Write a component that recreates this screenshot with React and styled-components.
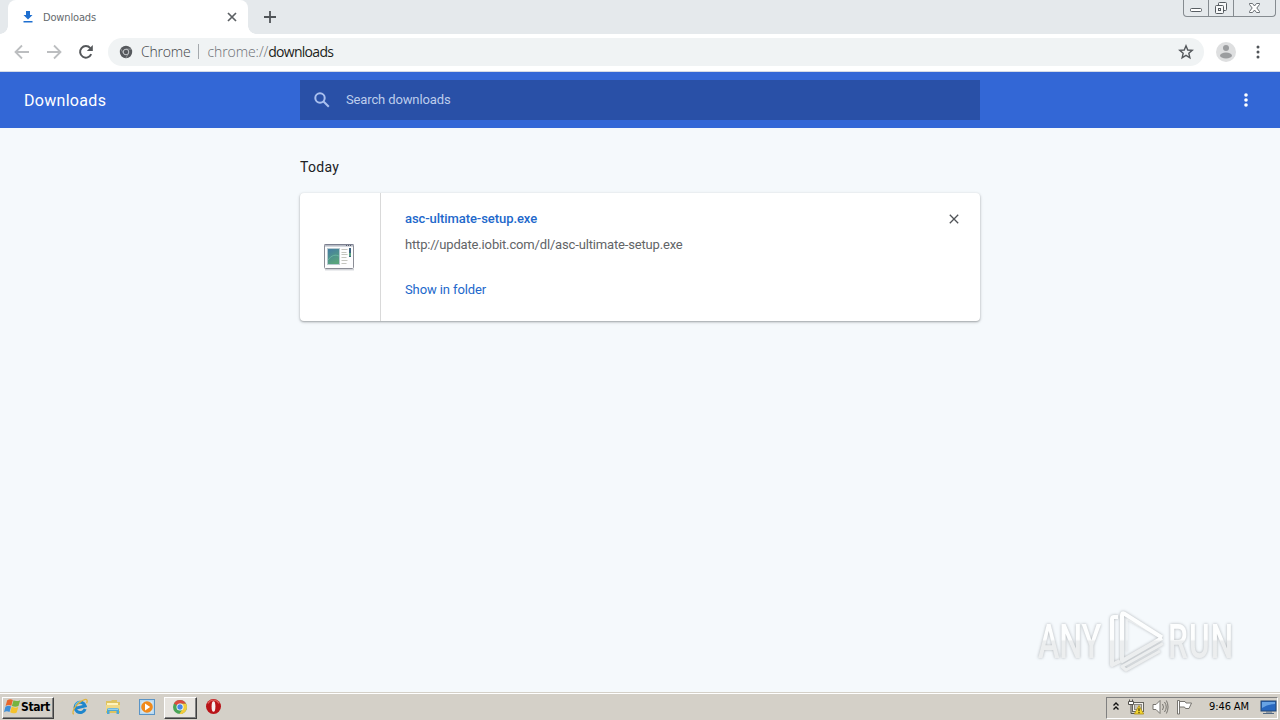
import styled, { createGlobalStyle, css } from 'styled-components';

const GlobalStyle = createGlobalStyle`
  * {
    box-sizing: border-box;
  }

  body {
    margin: 0;
    overflow: hidden;
    font-family: Roboto, "Liberation Sans", sans-serif;
  }

  svg {
    display: block;
    flex-shrink: 0;
  }

  button {
    padding: 0;
    border: none;
    background: none;
    font: inherit;
    color: inherit;
  }
`;

const Screen = styled.div`
  position: relative;
  display: flex;
  flex-direction: column;
  width: 1280px;
  height: 720px;
  background: #f5f9fc;
`;

/* Browser frame */

const TabStrip = styled.div`
  display: flex;
  height: 34px;
  padding-left: 8px;
  background: #e5e9ec;
`;

const Tab = styled.div`
  position: relative;
  display: flex;
  align-items: center;
  width: 240px;
  padding: 0 10px 0 14px;
  border-radius: 8px 8px 0 0;
  background: #fff;

  &::before,
  &::after {
    content: '';
    position: absolute;
    bottom: 0;
    width: 8px;
    height: 8px;
  }

  &::before {
    left: -8px;
    background: radial-gradient(circle at 0 0, transparent 7.5px, #fff 8px);
  }

  &::after {
    right: -8px;
    background: radial-gradient(circle at 100% 0, transparent 7.5px, #fff 8px);
  }
`;

const TabTitle = styled.span`
  flex: 1;
  margin-left: 9px;
  font-family: "DejaVu Sans Condensed", "DejaVu Sans", sans-serif;
  font-size: 11px;
  font-stretch: condensed;
  letter-spacing: -0.15px;
  color: #65696d;
`;

const NewTab = styled.button`
  display: flex;
  align-items: center;
  margin-left: 15px;
`;

const WindowControls = styled.div`
  display: flex;
  height: 17px;
  margin: 0 4px 0 auto;
  border: 1px solid #858b90;
  border-top: none;
  border-radius: 0 0 4px 4px;
`;

const WindowButton = styled.button`
  display: flex;
  align-items: center;
  justify-content: center;
  width: ${({ $width }) => $width}px;

  & + & {
    border-left: 1px solid #858b90;
  }
`;

const Toolbar = styled.div`
  display: flex;
  align-items: center;
  height: 38px;
  padding: 0 14px 2px;
  border-bottom: 1px solid #d5dbe6;
  background: #fff;
`;

const NavButtons = styled.div`
  display: flex;
  gap: 16px;
`;

const Omnibox = styled.div`
  display: flex;
  align-items: center;
  width: 1096px;
  height: 28px;
  margin: 0 12px 0 14px;
  padding: 0 10px 0 11px;
  border-radius: 14px;
  background: #f0f3f4;
  font-family: "Open Sans", "Noto Sans", sans-serif;
  font-size: 14px;
  font-weight: 300;
  color: #3f4347;

  svg:last-child {
    margin-left: auto;
  }
`;

const SiteName = styled.span`
  margin-left: 8px;
  letter-spacing: -0.2px;
`;

const Separator = styled.span`
  width: 1px;
  height: 15px;
  margin: 0 8px 0 8px;
  background: #a5a9ad;
`;

const Url = styled.span`
  letter-spacing: -0.08px;
  color: #6b6f73;

  b {
    font-weight: 400;
    letter-spacing: -0.72px;
    color: #1c1e20;
  }
`;

const MenuButton = styled.button`
  display: flex;
  justify-content: center;
  width: 16px;
  margin-left: 14px;
`;

/* Downloads page */

const PageHeader = styled.header`
  display: grid;
  grid-template-columns: 1fr 680px 1fr;
  align-items: center;
  height: 56px;
  padding: 0 24px;
  background: #3367d6;
  color: #fff;
`;

const Heading = styled.h1`
  margin: 1px 0 0;
  font-size: 16px;
  font-weight: 400;
  letter-spacing: 0.3px;
`;

const SearchField = styled.label`
  display: flex;
  align-items: center;
  gap: 14px;
  height: 40px;
  padding-left: 12px;
  background: #2950a7;
  font-size: 13px;
  letter-spacing: -0.13px;
  color: #bdcdec;
`;

const Placeholder = styled.span`
  padding-bottom: 2px;
`;

const HeaderMenu = styled.button`
  justify-self: end;
  margin-right: 2px;
  width: 16px;
  display: flex;
  justify-content: center;
`;

const Content = styled.main`
  flex: 1;
  width: 680px;
  margin: 0 auto;
  padding-top: 29px;
`;

const DateLabel = styled.h2`
  margin: 0;
  font-size: 14px;
  font-weight: 400;
  line-height: 20px;
  letter-spacing: 0.3px;
  color: #202124;
`;

const Card = styled.article`
  display: flex;
  height: 128px;
  margin-top: 16px;
  border-radius: 4px;
  background: #fff;
  box-shadow: 0 1px 2px rgba(60, 64, 67, 0.38), 0 1px 3px 1px rgba(60, 64, 67, 0.1);
`;

const FileIcon = styled.div`
  display: flex;
  align-items: center;
  justify-content: center;
  width: 81px;
  padding-right: 2px;
  border-right: 1px solid #d9d9d9;
`;

const Details = styled.div`
  display: flex;
  flex: 1;
  flex-direction: column;
  align-items: flex-start;
  padding: 16px 0 0 24px;
  font-size: 13px;
  line-height: 20px;
`;

const FileName = styled.a`
  font-weight: 500;
  letter-spacing: -0.07px;
  color: #2268cb;
`;

const FileUrl = styled.span`
  margin-top: 6px;
  letter-spacing: -0.16px;
  color: #626467;
`;

const ShowLink = styled.a`
  margin-top: 25px;
  letter-spacing: -0.1px;
  color: #2268cb;
`;

const RemoveButton = styled.button`
  align-self: flex-start;
  margin: 21px 21px 0 0;
`;

const Watermark = styled.div`
  position: absolute;
  right: 38px;
  bottom: 40px;
  filter: drop-shadow(0 0 1.5px rgba(80, 85, 90, 0.42));
`;

/* Taskbar */

const Taskbar = styled.footer`
  display: flex;
  align-items: center;
  height: 28px;
  padding: 2px 2px 0;
  border-top: 1px solid #d4d0c8;
  background: #d4d0c8;
  box-shadow: inset 0 1px 0 #fff;
  font-family: "DejaVu Sans Condensed", "DejaVu Sans", sans-serif;
  font-size: 11px;
  font-stretch: condensed;
`;

const raised = css`
  border: 1px solid;
  border-color: #fff #404040 #404040 #fff;
  box-shadow: inset -1px -1px 0 #808080;
`;

const StartButton = styled.button`
  display: flex;
  align-items: center;
  width: 52px;
  height: 22px;
  padding: 0 0 2px 1px;
  font-weight: 700;
  font-size: 12px;
  letter-spacing: -0.4px;
  color: #000;
  ${raised}
`;

const QuickLaunch = styled.div`
  display: flex;
  align-items: center;
  margin-left: 9px;
`;

const TaskButton = styled.button`
  display: flex;
  align-items: center;
  justify-content: center;
  width: 33.5px;
  height: 22px;
  padding-bottom: 2px;
  ${({ $active }) => $active && css`
    ${raised}
    background: #e7e4df;
  `}
`;

const Tray = styled.div`
  display: flex;
  align-items: center;
  width: 172px;
  height: 22px;
  margin-left: auto;
  padding: 0 0 2px 5px;
  border: 1px solid;
  border-color: #808080 #fff #fff #808080;
`;

const TrayIcons = styled.div`
  display: flex;
  align-items: center;
  gap: 7px;
`;

const Clock = styled.time`
  margin-left: 16px;
  margin-right: 10px;
  width: 42px;
  white-space: nowrap;
  letter-spacing: -0.1px;
  color: #000;
`;

const Dots = ({ color, size = 16, r = 1.6, step = 5 }) => (
  <svg width={size} height={size} viewBox="0 0 16 16" fill={color}>
    <circle cx="8" cy={8 - step} r={r} />
    <circle cx="8" cy="8" r={r} />
    <circle cx="8" cy={8 + step} r={r} />
  </svg>
);

const DownloadIcon = () => (
  <svg width="12" height="14" viewBox="0 0 12 14" fill="#1e6fd0">
    <path d="M4 1h4v4h2.500L6 9.500 1.500 5H4zM1.500 11h9v1.500h-9z" />
  </svg>
);

const Arrow = ({ flip }) => (
  <svg width="16" height="16" viewBox="0 0 16 16" fill="none" stroke="#bcbec0" strokeWidth="1.8">
    <path d={flip ? 'M1 8h13M8 1.5 14.5 8 8 14.5' : 'M15 8H2M8 1.5 1.5 8 8 14.5'} />
  </svg>
);

const Reload = () => (
  <svg width="16" height="16" viewBox="0 0 16 16">
    <path d="M13.2 10.2A5.8 5.8 0 1 1 12.3 4.1" fill="none" stroke="#54575a" strokeWidth="2" />
    <path d="M14.8 1v6H8.8z" fill="#54575a" />
  </svg>
);

const ChromeMono = () => (
  <svg width="14" height="14" viewBox="0 0 14 14">
    <circle cx="7" cy="7" r="6.2" fill="#56595d" />
    <circle cx="7" cy="7" r="2.8" fill="none" stroke="#d5d8da" strokeWidth="0.9" />
    <path d="M7 4.1h5.6M4.5 8.5 1.7 3.8M9.5 8.4 6.8 13.2" stroke="#b5b8ba" strokeWidth="0.6" />
  </svg>
);

const Star = () => (
  <svg width="16" height="16" viewBox="0 0 16 16" fill="none" stroke="#54585c" strokeWidth="1.4">
    <path d="m8 1.8 1.75 4.2 4.5.38-3.42 2.96 1.04 4.4L8 11.4l-3.87 2.34 1.04-4.4-3.42-2.96 4.5-.38z" />
  </svg>
);

const Avatar = () => (
  <svg width="20" height="20" viewBox="0 0 20 20">
    <circle cx="10" cy="10" r="10" fill="#dedfe0" />
    <circle cx="10" cy="6" r="3" fill="#9b9d9f" />
    <ellipse cx="10" cy="13.5" rx="6" ry="3" fill="#9b9d9f" />
  </svg>
);

const SearchIcon = () => (
  <svg width="20" height="20" viewBox="0 0 20 20" fill="none" stroke="#a9c0ef" strokeWidth="2">
    <circle cx="8" cy="8" r="4.7" />
    <path d="m11.5 11.5 5.3 5.3" />
  </svg>
);

const ExeIcon = () => (
  <svg width="32" height="28" viewBox="0 0 32 28">
    <defs>
      <linearGradient id="exe" x1="0" y1="0" x2="0.4" y2="1">
        <stop offset="0" stopColor="#437aa4" />
        <stop offset="1" stopColor="#58a47c" />
      </linearGradient>
    </defs>
    <rect x="1.5" y="1.5" width="29" height="24" rx="1" fill="#fdfdfe" stroke="#8b8d96" />
    <path d="M2 3h28" stroke="#d3d7dd" strokeWidth="2" />
    <path d="M1.5 1.8h29" stroke="#75798c" />
    <path d="M23 2.5h6" stroke="#555a6c" strokeDasharray="1 1" />
    <rect x="4.5" y="5.5" width="12" height="16" fill="url(#exe)" stroke="#b9cbd2" />
    <path d="M5 17q5-7 11-4" fill="none" stroke="#69b5a0" />
    <path d="M18.500 6.500h6M18.500 9.500h5M18.500 11.500h6M18.500 14.500h5M18.500 17.500h6M18.500 20.500h5" stroke="#c4c5bf" />
    <path d="M27 5v9" stroke="#3c6481" strokeWidth="2" />
    <path d="M27 10v3" stroke="#58a37e" strokeWidth="2" />
    <path d="M2 26.8h29" stroke="#bfc2c8" />
  </svg>
);

const WindowsLogo = () => (
  <svg width="17" height="17" viewBox="0 0 17 17">
    <path d="M3.2 2.300Q6 .3 8.900 1.900L7.300 7.800Q4.400 6.300 1.600 8z" fill="#e8672c" />
    <path d="M9.500 2.300q3 1.600 6.700-.1L14.500 8q-3 1.600-6.600 0z" fill="#76b33f" />
    <path d="M1.400 8.700q3-1.700 5.700-.3l-1.600 5.700Q2.700 12.500 0 14.300z" fill="#3f8fd8" />
    <path d="M7.700 8.800q3.300 1.600 6.600.1l-1.600 5.500q-3.200 1.800-6.500-.1z" fill="#f5c22c" />
  </svg>
);

const IeIcon = () => (
  <svg width="18" height="18" viewBox="0 0 18 18" fill="none">
    <g transform="rotate(-14 9 9)">
      <path d="M13.500 12.200a5.200 5.200 0 1 1 .8-3H5" stroke="#1f86cc" strokeWidth="3" />
      <path d="M4.800 6.800A5 5 0 0 1 11 4" stroke="#6cc6ea" strokeWidth="1.300" />
    </g>
    <path d="M2.800 16.300C-.5 14.500 6 4 13.600 1.600c3-.8 3 1.600 2 3.700" stroke="#dfb440" strokeWidth="1.300" />
  </svg>
);

const FolderIcon = () => (
  <svg width="18" height="18" viewBox="0 0 18 18">
    <path d="M2 3h5l1-1h5v2h3v11H2z" fill="#dfc35f" />
    <path d="M3 5h11v3H3z" fill="#fff4bd" />
    <path d="M2 7h14v6H2z" fill="#f0d987" />
    <path d="M3 16v-4q0-2 2-2h8q2 0 2 2v4h-2.500v-3h-7v3z" fill="#4da7d5" />
    <path d="M4 11.200h10" stroke="#b9e2f4" />
  </svg>
);

const PlayerIcon = () => (
  <svg width="18" height="18" viewBox="0 0 18 18">
    <rect x="1.5" y="1.5" width="15" height="15" fill="#b9d9f0" stroke="#5a94c6" />
    <rect x="3.5" y="3.5" width="11" height="11" fill="#d7eaf6" />
    <circle cx="9" cy="9" r="5.800" fill="#f08a1c" />
    <path d="M7 5.600 12.200 9 7 12.400z" fill="#fff" />
  </svg>
);

const ChromeIcon = () => (
  <svg width="16" height="16" viewBox="0 0 16 16">
    <circle cx="8" cy="8" r="7" fill="#4aa557" />
    <path d="M8 8 1.9 4.5A7 7 0 0 1 14.1 4.8H8z" fill="#db4b3f" />
    <path d="M14.1 4.8A7 7 0 0 1 7.3 15L11 9.5 8 4.8z" fill="#f4cb3c" />
    <circle cx="8" cy="8" r="3.5" fill="#fff" />
    <circle cx="8" cy="8" r="2.7" fill="#4687e5" />
  </svg>
);

const OperaIcon = () => (
  <svg width="17" height="17" viewBox="0 0 17 17">
    <circle cx="8.5" cy="8.5" r="7.5" fill="#b91318" />
    <path d="M3 5.5a6.2 6.2 0 0 1 11 0" fill="none" stroke="#df5a56" strokeWidth="1.4" />
    <ellipse cx="8.5" cy="8.5" rx="1.9" ry="5.3" fill="#f7eeee" />
  </svg>
);

const NetworkIcon = () => (
  <svg width="18" height="16" viewBox="0 0 18 16">
    <rect x="5.500" y="3.500" width="11" height="9" fill="#f4f2ed" stroke="#66645e" />
    <rect x="7.500" y="5.500" width="7" height="5" fill="#c8c5bd" stroke="#8c8982" />
    <path d="M1.500 2.500h5v3h-5z" fill="#fff" stroke="#55534e" />
    <path d="M2.500.5v2m3-2v2M4 6v8.500h8" fill="none" stroke="#55534e" />
    <path d="m12 6.500 4.700 8.500H7.300z" fill="#f4d62f" stroke="#aa8c16" strokeWidth="0.800" />
    <path d="M12 9.200v3m0 .8v1.200" stroke="#3e3508" strokeWidth="1.200" />
  </svg>
);

const SpeakerIcon = () => (
  <svg width="17" height="16" viewBox="0 0 17 16" fill="none" stroke="#77756f">
    <path d="M1 5.5h3l4-4v13l-4-4H1z" fill="#fff" />
    <path d="M10.5 5q2 3 0 6M12.5 3q3.5 5 0 10M14.4 1.5q3.3 6.5 0 13" />
  </svg>
);

const FlagIcon = () => (
  <svg width="17" height="16" viewBox="0 0 17 16">
    <path d="M1.500 1.500h2v13.500h-2z" fill="#fff" stroke="#6b6963" strokeWidth="0.900" />
    <path d="M3.500 2.500h5.500l1 1.500h5.500l-2.500 5.500H9.500L8.500 8h-5z" fill="#fff" stroke="#6b6963" strokeWidth="0.900" />
  </svg>
);

const MonitorIcon = () => (
  <svg width="17" height="16" viewBox="0 0 17 16">
    <rect x="1" y="2" width="15" height="10" fill="#2767bf" stroke="#234775" />
    <path d="M2 3h13v2Q8 5 2 9z" fill="#68a3e4" />
    <path d="M6 13h6M3 14.5h11" stroke="#526983" />
  </svg>
);

const AnyRunLogo = () => (
  <svg width="210" height="72" viewBox="0 0 210 72" overflow="visible">
    <defs>
      <linearGradient id="fade" gradientUnits="userSpaceOnUse" x1="0" y1="14" x2="0" y2="50">
        <stop offset="0.48" stopColor="#fdfefe" />
        <stop offset="0.54" stopColor="#eceeef" />
      </linearGradient>
      <linearGradient id="letterFade" gradientUnits="userSpaceOnUse" x1="0" y1="-36" x2="0" y2="0">
        <stop offset="0.48" stopColor="#fdfefe" />
        <stop offset="0.54" stopColor="#eceeef" />
      </linearGradient>
    </defs>
    <g fill="url(#letterFade)" fontFamily="Roboto, sans-serif" fontWeight="500" fontSize="49">
      <text transform="translate(6 50) scale(0.66 1)" textLength="96">ANY</text>
      <text transform="translate(136 50) scale(0.645 1)" textLength="101">RUN</text>
    </g>
    <g fill="none" stroke="url(#fade)" strokeWidth="4" strokeLinejoin="round">
      <path d="M86 9h-4q-2 0-2 2v46l8-4" />
      <path d="M130 29.500 92 5.500q-2-1-2 2V53l40-23" />
      <path d="m126 28-31-17v33" strokeWidth="1.500" opacity="0.500" />
      <path d="m131 35.500-41 23 4 3.500 34-19" strokeWidth="3" />
    </g>
  </svg>
);

export default function App() {
  return (
    <Screen>
      <GlobalStyle />
      <TabStrip>
        <Tab>
          <DownloadIcon />
          <TabTitle>Downloads</TabTitle>
          <svg width="12" height="12" viewBox="0 0 12 12" stroke="#5c6064" strokeWidth="1.7">
            <path d="m2 2 8 8m0-8-8 8" />
          </svg>
        </Tab>
        <NewTab aria-label="New tab">
          <svg width="14" height="14" viewBox="0 0 14 14" stroke="#505458" strokeWidth="1.8">
            <path d="M7 1v12M1 7h12" />
          </svg>
        </NewTab>
        <WindowControls>
          <WindowButton $width={24} aria-label="Minimize">
            <svg width="14" height="16" viewBox="0 0 14 16">
              <rect x="1.5" y="8.5" width="11" height="3" rx="1" fill="#fff" stroke="#585e63" />
            </svg>
          </WindowButton>
          <WindowButton $width={25} aria-label="Restore">
            <svg width="14" height="16" viewBox="0 0 14 16" fill="#f7f8f9" stroke="#555b60">
              <rect x="4.5" y="2.5" width="8" height="8" rx="1" />
              <rect x="1.5" y="5.5" width="8" height="8" rx="1" />
              <rect x="4.5" y="8.5" width="2" height="2" />
            </svg>
          </WindowButton>
          <WindowButton $width={42} aria-label="Close">
            <svg width="13" height="16" viewBox="0 0 13 16">
              <path d="M1.5 3.5h3l2 2.5 2-2.5h3v1L8.8 8l2.700 3.500v1h-3l-2-2.500-2 2.500h-3v-1L4.200 8 1.500 4.500z" fill="#fff" stroke="#5b6166" strokeWidth="0.9" />
            </svg>
          </WindowButton>
        </WindowControls>
      </TabStrip>

      <Toolbar>
        <NavButtons>
          <Arrow />
          <Arrow flip />
          <Reload />
        </NavButtons>
        <Omnibox>
          <ChromeMono />
          <SiteName>Chrome</SiteName>
          <Separator />
          <Url>chrome://<b>downloads</b></Url>
          <Star />
        </Omnibox>
        <Avatar />
        <MenuButton aria-label="Menu">
          <Dots color="#505458" r={1.5} />
        </MenuButton>
      </Toolbar>

      <PageHeader>
        <Heading>Downloads</Heading>
        <SearchField>
          <SearchIcon />
          <Placeholder>Search downloads</Placeholder>
        </SearchField>
        <HeaderMenu aria-label="More actions">
          <Dots color="#fff" r={1.8} />
        </HeaderMenu>
      </PageHeader>

      <Content>
        <DateLabel>Today</DateLabel>
        <Card>
          <FileIcon>
            <ExeIcon />
          </FileIcon>
          <Details>
            <FileName>asc-ultimate-setup.exe</FileName>
            <FileUrl>http://update.iobit.com/dl/asc-ultimate-setup.exe</FileUrl>
            <ShowLink>Show in folder</ShowLink>
          </Details>
          <RemoveButton aria-label="Remove from list">
            <svg width="10" height="10" viewBox="0 0 10 10" stroke="#505357" strokeWidth="1.3">
              <path d="m.8.8 8.4 8.4m0-8.4L.8 9.2" />
            </svg>
          </RemoveButton>
        </Card>
      </Content>

      <Watermark>
        <AnyRunLogo />
      </Watermark>

      <Taskbar>
        <StartButton>
          <WindowsLogo />
          Start
        </StartButton>
        <QuickLaunch>
          <TaskButton><IeIcon /></TaskButton>
          <TaskButton><FolderIcon /></TaskButton>
          <TaskButton><PlayerIcon /></TaskButton>
          <TaskButton $active><ChromeIcon /></TaskButton>
          <TaskButton><OperaIcon /></TaskButton>
        </QuickLaunch>
        <Tray>
          <TrayIcons>
            <svg width="8" height="12" viewBox="0 0 8 12" fill="none" stroke="#111" strokeWidth="1.4">
              <path d="m1.500 4.500 2.500-2.500 2.500 2.500m-5 4L4 6l2.500 2.500" />
            </svg>
            <NetworkIcon />
            <SpeakerIcon />
            <FlagIcon />
          </TrayIcons>
          <Clock>9:46 AM</Clock>
          <MonitorIcon />
        </Tray>
      </Taskbar>
    </Screen>
  );
}
